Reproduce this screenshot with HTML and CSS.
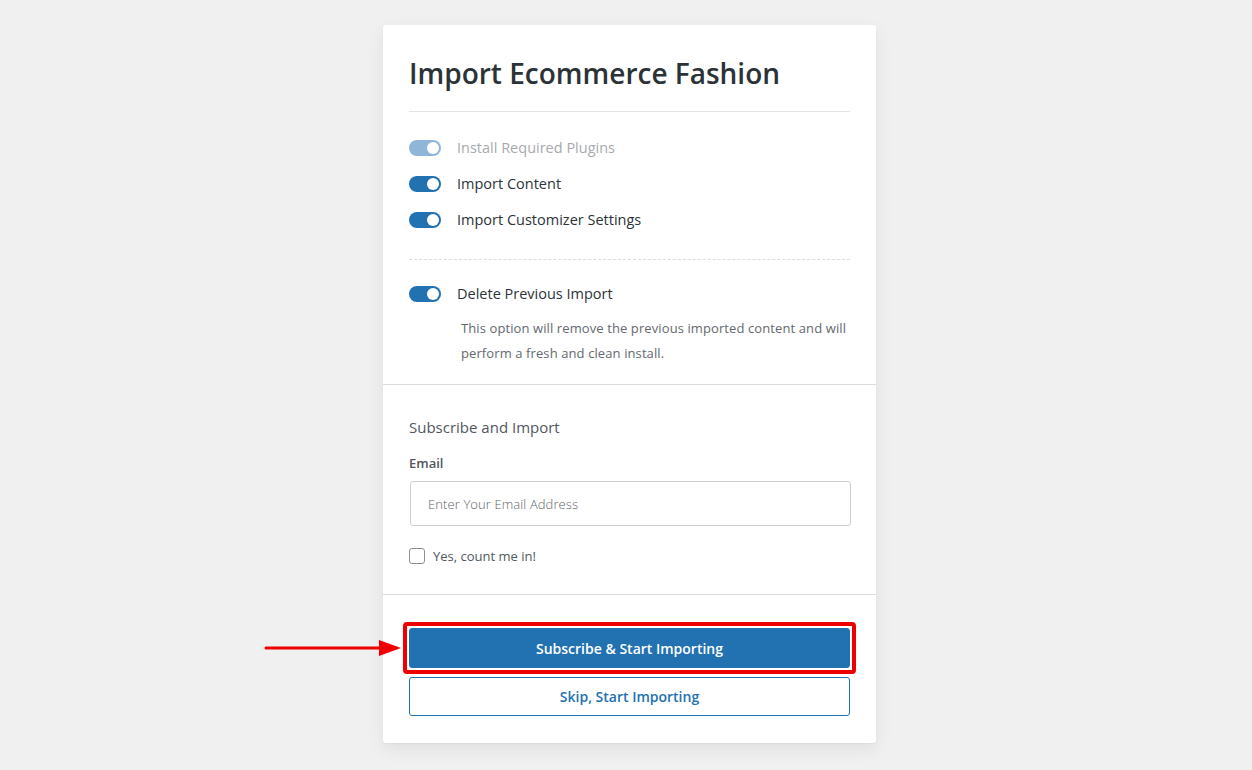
FILE: index.html
```html
<!DOCTYPE html>
<html lang="en">
<head>
<meta charset="utf-8">
<title>Import Ecommerce Fashion</title>
<link rel="stylesheet" href="styles.css">
</head>
<body>
<div class="page">
  <div class="card">
    <section class="section options">
      <h1 class="title">Import Ecommerce Fashion</h1>
      <div class="toggle-list">
        <div class="toggle-row disabled"><span class="toggle"></span><span class="toggle-label">Install Required Plugins</span></div>
        <div class="toggle-row"><span class="toggle"></span><span class="toggle-label">Import Content</span></div>
        <div class="toggle-row"><span class="toggle"></span><span class="toggle-label">Import Customizer Settings</span></div>
      </div>
      <div class="dashed"></div>
      <div class="toggle-row"><span class="toggle"></span><span class="toggle-label">Delete Previous Import</span></div>
      <p class="desc">This option will remove the previous imported content and will perform a fresh and clean install.</p>
    </section>
    <section class="section subscribe">
      <h2 class="sub-title">Subscribe and Import</h2>
      <label class="field-label" for="email">Email</label>
      <input class="email" id="email" type="text" placeholder="Enter Your Email Address">
      <label class="check-row"><span class="checkbox"></span><span class="check-text">Yes, count me in!</span></label>
    </section>
    <section class="section actions">
      <div class="highlight">
        <button class="btn btn-primary">Subscribe &amp; Start Importing</button>
        <svg class="arrow" width="140" height="20" viewBox="0 0 140 20"><line x1="3" y1="10" x2="120" y2="10" stroke="#ee0000" stroke-width="3" stroke-linecap="round"/><polygon points="116,2 138,10 116,18" fill="#ee0000"/></svg>
      </div>
      <button class="btn btn-secondary">Skip, Start Importing</button>
    </section>
  </div>
</div>
</body>
</html>
```

FILE: styles.css
```css
* { box-sizing: border-box; }
html, body { margin: 0; padding: 0; }
body {
  background: #f0f0f0;
  font-family: "Open Sans", "Noto Sans", sans-serif;
  color: #3c434a;
}
.page {
  display: flex;
  justify-content: center;
  padding: 25px 0 0 7px;
  min-height: 770px;
}
.card {
  width: 493px;
  height: 718px;
  background: #fff;
  border-radius: 3px;
  box-shadow: 0 6px 18px rgba(0,0,0,0.07), 0 1px 2px rgba(0,0,0,0.04);
}
.section { padding: 0 26px; }
.options { padding-top: 28px; padding-bottom: 18px; border-bottom: 1px solid #dcdcde; }
.title {
  margin: 0;
  font-size: 28px;
  font-weight: 600;
  color: #2c3338;
  line-height: 40px;
  padding-bottom: 18px;
  border-bottom: 1px solid #e2e4e7;
}
.toggle-list {
  display: flex;
  flex-direction: column;
  gap: 20px;
  padding: 28px 0 31px;
  border-bottom: 1px dashed #dcdcde;
}
.dashed { height: 26px; }
.toggle-row { display: flex; align-items: center; gap: 16px; height: 16px; }
.toggle {
  position: relative;
  width: 32px;
  height: 16px;
  border-radius: 8px;
  background: #2271b1;
  flex: none;
}
.toggle::after {
  content: "";
  position: absolute;
  right: 2px;
  top: 2px;
  width: 12px;
  height: 12px;
  border-radius: 50%;
  background: #fff;
}
.toggle-label { font-size: 14.5px; font-weight: 500; color: #2c3338; line-height: 16px; }
.disabled .toggle { background: #8fb6d9; }
.disabled .toggle-label { color: #a7aaad; }
.desc {
  margin: 14px 0 0 52px;
  font-size: 13px;
  letter-spacing: 0.1px;
  line-height: 25px;
  color: #646970;
}
.subscribe { padding-top: 32px; padding-bottom: 30px; border-bottom: 1px solid #dcdcde; }
.sub-title { margin: 0; font-size: 15px; font-weight: 500; color: #50575e; line-height: 20px; }
.field-label { display: block; margin-top: 17px; font-size: 13px; font-weight: 600; color: #50575e; line-height: 18px; }
.email {
  display: block;
  width: 441px;
  height: 45px;
  margin: 9px 0 0 1px;
  padding: 0 17px;
  border: 1px solid #cfcfd1;
  border-radius: 3px;
  font-family: "Open Sans", sans-serif;
  font-size: 13px;
  font-weight: 300;
  letter-spacing: 0.1px;
  color: #3c434a;
  outline: none;
}
.email::placeholder { color: #5f6469; }
.check-row { display: flex; align-items: center; gap: 8px; margin-top: 22px; }
.checkbox { width: 16px; height: 16px; border: 1px solid #8c8f94; border-radius: 3px; flex: none; }
.check-text { font-size: 13px; color: #50575e; line-height: 16px; }
.actions { padding-top: 27px; display: flex; flex-direction: column; gap: 3px; }
.highlight {
  position: relative;
  margin: 0 -6px;
  padding: 2px;
  border: 4px solid #ee0000;
  border-radius: 4px;
}
.btn {
  display: block;
  width: 100%;
  height: 40px;
  border-radius: 3px;
  font-family: "Open Sans", sans-serif;
  font-size: 14px;
  font-weight: 600;
  cursor: pointer;
}
.btn-primary { background: #2271b1; border: 1px solid #2271b1; color: #fff; }
.btn-secondary { background: #fff; border: 1px solid #2271b1; color: #2271b1; height: 39px; }
.arrow { position: absolute; left: -144px; top: 12px; }
```
